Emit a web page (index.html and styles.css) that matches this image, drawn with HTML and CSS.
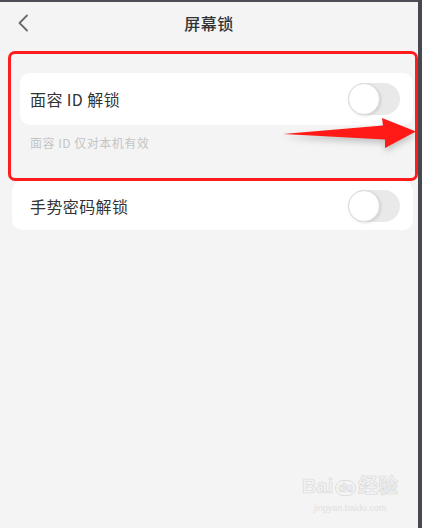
FILE: index.html
```html
<!DOCTYPE html>
<html lang="zh">
<head>
<meta charset="utf-8">
<title>屏幕锁</title>
<link rel="stylesheet" href="styles.css">
</head>
<body>
<div class="frame">
  <header class="header">
    <svg class="back" width="12" height="18" viewBox="0 0 12 18"><path d="M10 1.5 L2.5 9 L10 16.5" fill="none" stroke="#6a6a6a" stroke-width="1.8" stroke-linecap="round" stroke-linejoin="round"/></svg>
    <h1 class="title">屏幕锁</h1>
    <span></span>
  </header>

  <section class="highlight">
    <div class="card card-face">
      <span class="label">面容 ID 解锁</span>
      <span class="toggle"><span class="knob"></span></span>
    </div>
    <p class="hint">面容 ID 仅对本机有效</p>
    <svg class="arrow" width="140" height="44" viewBox="0 0 140 44">
      <polygon points="0,25 100,16.5 99,9 133,22.5 102,39 102,30.5" fill="#ff1a17"/>
    </svg>
  </section>

  <div class="card card-gesture">
    <span class="label">手势密码解锁</span>
    <span class="toggle"><span class="knob"></span></span>
  </div>

  <div class="watermark">
    <div class="wm-logo"><span>Bai</span><span class="paw">du</span><span>经验</span></div>
    <div class="wm-url">jingyan.baidu.com</div>
  </div>
</div>
</body>
</html>
```

FILE: styles.css
```css
* { box-sizing: border-box; }
html, body {
  margin: 0;
  padding: 0;
  width: 422px;
  height: 528px;
  overflow: hidden;
  background: #f4f4f4;
  font-family: "Noto Sans CJK SC", "Noto Sans", sans-serif;
}
.frame {
  position: relative;
  width: 422px;
  height: 528px;
  border-top: 2px solid #4d4d57;
  border-right: 4px solid #48484e;
  background: #f4f4f4;
}
.header {
  height: 49px;
  display: grid;
  grid-template-columns: 60px 1fr 60px;
  align-items: center;
  padding-bottom: 8px;
}
.back {
  margin-left: 17px;
}
.title {
  margin: 0;
  text-align: center;
  font-size: 16px;
  font-weight: 500;
  color: #333;
  letter-spacing: 0.5px;
}
.highlight {
  position: relative;
  margin: 0 0 0 8px;
  width: 410px;
  height: 130px;
  border: 3px solid #ff1c1c;
  border-radius: 7px;
  padding-top: 19px;
}
.card {
  display: flex;
  align-items: center;
  justify-content: space-between;
  background: #fff;
  border-radius: 10px;
}
.card-face {
  margin-left: 9px;
  width: 393px;
  height: 52px;
  padding: 0 13px 0 10px;
}
.card-gesture {
  margin-left: 12px;
  width: 401px;
  height: 49px;
  padding: 0 13px 0 18px;
}
.label {
  font-size: 16px;
  color: #333;
  letter-spacing: 0.4px;
}
.toggle {
  display: flex;
  align-items: center;
  width: 52px;
  height: 32px;
  border-radius: 16px;
  background: #e9e9e9;
}
.knob {
  width: 32px;
  height: 32px;
  border-radius: 50%;
  background: #fff;
  border: 1px solid #dcdcdc;
  box-shadow: 1px 1px 3px rgba(0,0,0,0.12);
}
.hint {
  margin: 9px 0 0 19px;
  font-size: 12px;
  color: #c4c4c4;
  letter-spacing: 0.5px;
}
.arrow {
  position: absolute;
  left: 272px;
  top: 55px;
  filter: drop-shadow(0 4px 3px rgba(0,0,0,0.2));
}
.watermark {
  position: absolute;
  left: 300px;
  top: 474px;
  width: 100px;
  text-align: center;
  color: #e2e2e2;
  font-family: "Liberation Sans", "Noto Sans CJK SC", sans-serif;
}
.wm-logo {
  display: flex;
  align-items: flex-end;
  justify-content: center;
  gap: 2px;
  font-size: 20px;
  font-weight: 700;
  line-height: 1;
  -webkit-text-stroke: 0.6px #d8d8d8;
  color: #f2f2f2;
}
.paw {
  font-size: 12px;
  border-radius: 8px;
  padding: 1px 2px;
  border: 1.5px solid #dedede;
}
.wm-url {
  margin-top: 7px;
  font-size: 9px;
  color: #e0e0e0;
}
```
